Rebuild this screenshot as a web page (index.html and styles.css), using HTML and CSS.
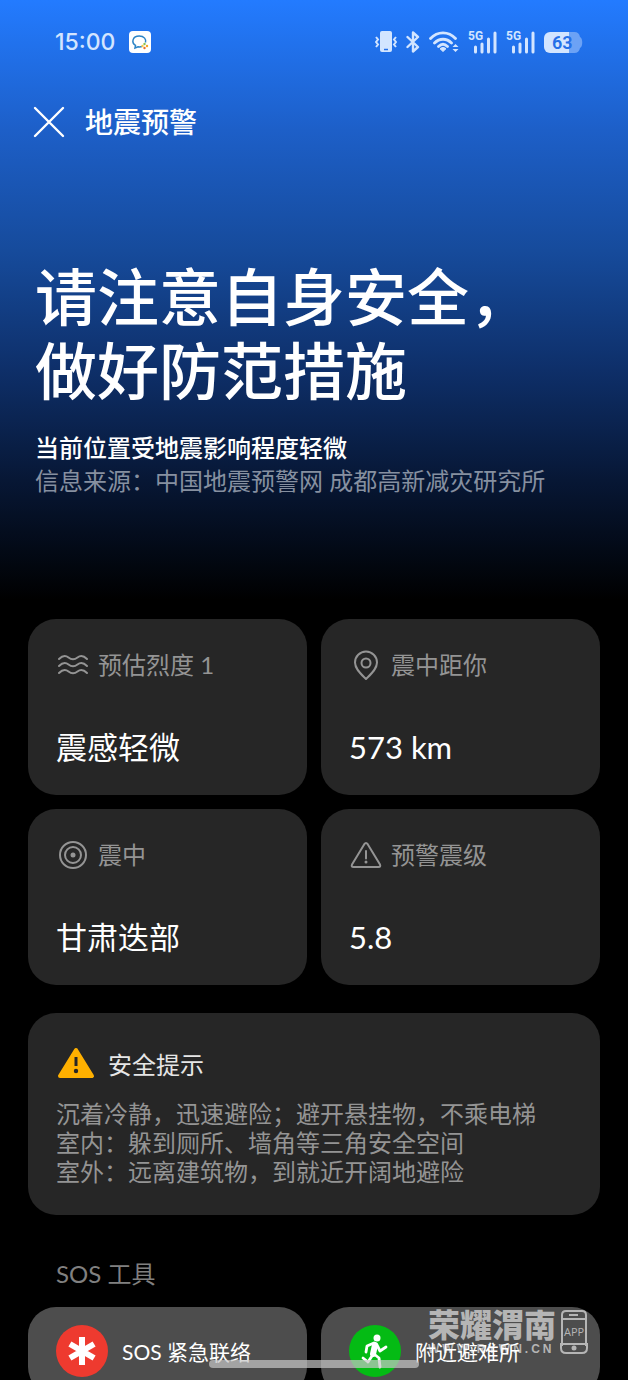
FILE: index.html
```html
<!DOCTYPE html>
<html lang="zh-CN">
<head>
	<meta charset="utf-8">
	<meta name="viewport" content="width=device-width, initial-scale=1">
	<title>地震预警</title>
	<link rel="stylesheet" href="styles.css">
</head>
<body>
	<div class="screen">
		<div class="status-bar">
			<span class="time">15:00</span>
			<svg class="app-badge" viewBox="0 0 22 22">
				<rect width="22" height="22" rx="4" fill="#fff"/>
				<path d="M13 15.500c-1.200.4-2.600.5-4 .2L6 17l.5-2.600C2 11.500 3.500 5 10.200 5c5 0 7.300 3.500 6.300 6.500" fill="none" stroke="#2b84c6" stroke-width="1.500"/>
				<circle cx="15.500" cy="13" r="1.200" fill="#8cc152"/>
				<circle cx="18" cy="15" r="1.200" fill="#f5a623"/>
				<circle cx="15.500" cy="17" r="1.200" fill="#e8742c"/>
				<circle cx="13.500" cy="15" r="1.200" fill="#f7c948"/>
			</svg>
			<div class="status-icons">
				<svg width="22" height="22" viewBox="0 0 22 22">
					<rect x="5" y="0" width="12" height="21" rx="2" fill="#d3e5ff"/>
					<path d="M9 18.500h4" stroke="#2570e8" stroke-width="1.500"/>
					<path d="M1 6l2 2.500-2 2.500 2 2.500-2 2.500M21 6l-2 2.500 2 2.500-2 2.500 2 2.500" fill="none" stroke="#d3e5ff" stroke-width="2"/>
				</svg>
				<svg width="14" height="22" viewBox="0 0 14 22">
					<path d="M1.500 6L12 16l-5 4.500v-19L12 6 1.500 16" fill="none" stroke="#d3e5ff" stroke-width="2.400" stroke-linejoin="round" stroke-linecap="round"/>
				</svg>
				<svg width="30" height="22" viewBox="0 0 30 22">
					<path d="M1.500 7.500c7-7.500 18-7.500 25 0M5.500 12c5-5 12-5 17 0M9.500 15.500c3-3 6-3 9 0" fill="none" stroke="#d3e5ff" stroke-width="2.800" stroke-linecap="round"/>
					<path d="M14 20.500l-3-2.800c2-1.600 4-1.600 6 0z" fill="#d3e5ff" stroke="#d3e5ff"/>
					<path d="M23.500 16h6l-3-3zM23.500 18h6l-3 3z" fill="#d3e5ff"/>
				</svg>
				<svg width="29" height="24" viewBox="0 0 29 24">
					<text class="network" x="0" y="10">5G</text>
					<path d="M7.500 17v5M14 14v8M20.500 9v13M27 3v19" stroke="#d3e5ff" stroke-width="3" stroke-linecap="round"/>
				</svg>
				<svg width="29" height="24" viewBox="0 0 29 24">
					<text class="network" x="0" y="10">5G</text>
					<path d="M7.500 17v5M14 14v8M20.500 9v13M27 3v19" stroke="#d3e5ff" stroke-width="3" stroke-linecap="round"/>
				</svg>
				<svg class="battery" width="39" height="21" viewBox="0 0 39 21">
					<path d="M24 0h6a6 6 0 0 1 6 5c3 1 3 10 0 11a6 6 0 0 1-6 5h-6z" fill="#6ca2f5"/>
					<path d="M6 0h19v21H6a6 6 0 0 1-6-6V6a6 6 0 0 1 6-6z" fill="#d3e5ff"/>
					<text x="8" y="17">63</text>
				</svg>
			</div>
		</div>

		<header>
			<button class="close" aria-label="关闭">
				<svg width="32" height="32" viewBox="0 0 32 32"><path d="M2 2l28 28M30 2L2 30" stroke="#fff" stroke-width="2.400" stroke-linecap="round"/></svg>
			</button>
			<span class="page-title">地震预警</span>
		</header>

		<section class="alert">
			<h1>请注意自身安全，<br>做好防范措施</h1>
			<p>当前位置受地震影响程度轻微</p>
			<p class="source">信息来源：中国地震预警网 成都高新减灾研究所</p>
		</section>

		<main>
			<div class="grid">
				<div class="card">
					<div class="label">
						<svg width="34" height="34" viewBox="0 0 34 34"><path d="M3 11q5-5 9.500-1.500t9 0T31 11M3 18q5-5 9.500-1.500t9 0T31 18M3 25q5-5 9.500-1.500t9 0T31 25"/></svg>
						<span>预估烈度 1</span>
					</div>
					<div class="value">震感轻微</div>
				</div>
				<div class="card">
					<div class="label">
						<svg width="34" height="34" viewBox="0 0 34 34"><path d="M17 31C12 26 6 21 6 14.500a11 11 0 0 1 22 0C28 21 22 26 17 31z"/><circle cx="17" cy="15" r="4.500"/></svg>
						<span>震中距你</span>
					</div>
					<div class="value">573 km</div>
				</div>
				<div class="card">
					<div class="label">
						<svg width="34" height="34" viewBox="0 0 34 34"><circle cx="17" cy="17" r="13"/><circle cx="17" cy="17" r="8"/><circle cx="17" cy="17" r="2.500" class="dot"/></svg>
						<span>震中</span>
					</div>
					<div class="value">甘肃迭部</div>
				</div>
				<div class="card">
					<div class="label">
						<svg width="34" height="34" viewBox="0 0 34 34"><path d="M15.300 6.200q1.700-2.400 3.400 0L31 26.500q1 2.500-1.500 2.500h-25Q2 29 3 26.500zM17 13v7.500"/><circle cx="17" cy="24" r="1.500" class="dot"/></svg>
						<span>预警震级</span>
					</div>
					<div class="value">5.8</div>
				</div>
			</div>

			<div class="card tips">
				<h2>
					<svg width="40" height="34" viewBox="0 0 40 34">
						<path d="M20 4L36 30H4z" fill="#ffb000" stroke="#ffb000" stroke-width="4" stroke-linejoin="round"/>
						<path d="M20 11v9" stroke="#262626" stroke-width="3"/>
						<circle cx="20" cy="25" r="2.200" fill="#262626"/>
					</svg>
					安全提示
				</h2>
				<p>沉着冷静，迅速避险；避开悬挂物，不乘电梯<br>室内：躲到厕所、墙角等三角安全空间<br>室外：远离建筑物，到就近开阔地避险</p>
			</div>

			<h3>SOS 工具</h3>
			<div class="grid">
				<button class="tool">
					<svg width="52" height="52" viewBox="0 0 52 52">
						<circle cx="26" cy="26" r="26" fill="#ee3a2f"/>
						<path d="M26 12v28M13.900 19l24.200 14M38.100 19L13.900 33" stroke="#fff" stroke-width="6"/>
					</svg>
					<span>SOS 紧急联络</span>
				</button>
				<button class="tool">
					<svg width="52" height="52" viewBox="0 0 52 52">
						<circle cx="26" cy="26" r="26" fill="#04bb14"/>
						<circle cx="28" cy="13" r="3.500" fill="#fff"/>
						<path d="M26 20l-2 9" stroke="#fff" stroke-width="6" stroke-linecap="round"/>
						<path d="M25 18l-7 3-1 6M28 20l3 6 6-4M25 29l5 4 1 9M23 31l-4 6-5-4" fill="none" stroke="#fff" stroke-width="2.800" stroke-linecap="round" stroke-linejoin="round"/>
					</svg>
					<span>附近避难所</span>
				</button>
			</div>
		</main>

		<div class="watermark">
			<div>
				<div class="mark-name">荣耀渭南</div>
				<div class="mark-url">WWW.RYWN.CN</div>
			</div>
			<svg width="28" height="46" viewBox="0 0 28 46">
				<path d="M2 37V6q0-4 4-4h16q4 0 4 4v31M1 10h26M1 35h26v4q0 5-5 5H6q-5 0-5-5zM9 6h9" fill="none" stroke="#b5b5b5" stroke-width="2"/>
				<circle cx="14" cy="39" r="2.500" fill="#b5b5b5"/>
				<text x="4" y="27">APP</text>
			</svg>
		</div>
		<div class="home-bar"></div>
	</div>
</body>
</html>
```

FILE: styles.css
```css
* {
	box-sizing: border-box;
}
body {
	margin: 0;
	background-color: #000;
	color: #fff;
	font-family: Lato, "Noto Sans CJK SC", sans-serif;
	font-size: 24px;
}
h1, h2, h3, p {
	margin: 0;
	font-weight: 400;
}
button {
	border: none;
	padding: 0;
	color: inherit;
	font-family: inherit;
	cursor: pointer;
}
svg {
	display: block;
	flex-shrink: 0;
}
.screen {
	position: relative;
	height: 100vh;
	overflow: hidden;
	background: linear-gradient(#237bff 0, #1d5fc8 130px, #164b9c 250px, #0e2f69 370px, #071735 480px, #000 600px);
}

/* status bar */
.status-bar {
	display: flex;
	align-items: center;
	height: 84px;
	padding: 0 45px 0 55px;
}
.time {
	font-family: Inter, sans-serif;
	font-size: 23px;
	font-weight: 500;
	color: #d3e5ff;
}
.app-badge {
	width: 22px;
	height: 22px;
	margin-left: 14px;
}
.status-icons {
	display: flex;
	align-items: center;
	gap: 9px;
	margin-left: auto;
}
.network {
	font: 700 12px Roboto, sans-serif;
	fill: #d3e5ff;
}
.battery text {
	font: 600 18px Roboto, sans-serif;
	fill: #2570e8;
}

header {
	display: flex;
	align-items: center;
	gap: 20px;
	height: 76px;
	padding: 0 33px;
}
.close {
	background: none;
}
.page-title {
	font-size: 28px;
	font-weight: 500;
	line-height: 40px;
}

.alert {
	padding: 100px 35px 0;
	height: 459px;
	line-height: 33px;
}
.alert h1 {
	margin-bottom: 23px;
	font-size: 62px;
	font-weight: 500;
	line-height: 74px;
}
.alert p {
	font-weight: 500;
}
.alert .source {
	color: #8690a0;
	font-weight: 400;
}

/* cards */
main {
	padding: 0 28px;
}
.grid {
	display: grid;
	grid-template-columns: 1fr 1fr;
	gap: 14px;
}
.card {
	padding: 28px;
	border-radius: 28px;
	background-color: #262626;
}
.grid .card {
	height: 176px;
}
.label {
	display: flex;
	align-items: center;
	gap: 8px;
	height: 36px;
	line-height: 34px;
	color: #949494;
}
.label svg {
	fill: none;
	stroke: #949494;
	stroke-width: 2;
	stroke-linecap: round;
	stroke-linejoin: round;
}
.label .dot {
	fill: #949494;
	stroke: none;
}
.value {
	margin-top: 42px;
	font-size: 31px;
	line-height: 44px;
}

.tips {
	margin-top: 28px;
	height: 202px;
}
.tips h2 {
	display: flex;
	align-items: center;
	gap: 12px;
	height: 44px;
	font-size: 24px;
	color: #e6e6e6;
}
.tips p {
	margin-top: 14px;
	line-height: 29px;
	color: #949494;
	white-space: nowrap;
}

h3 {
	padding: 42px 28px 16px;
	font-size: 24px;
	line-height: 34px;
	color: #808080;
}
.tool {
	display: flex;
	align-items: center;
	gap: 14px;
	height: 88px;
	padding: 0 28px;
	border-radius: 28px;
	background-color: #4d4d4d;
	font-size: 21px;
}
.tool span {
	position: relative;
	z-index: 1;
}

/* overlays */
.watermark {
	position: absolute;
	right: 40px;
	bottom: 24px;
	display: flex;
	align-items: center;
	gap: 4px;
	color: #b5b5b5;
	pointer-events: none;
}
.mark-name {
	font-size: 32px;
	font-weight: 900;
	line-height: 34px;
}
.mark-url {
	width: 128px;
	font: 700 12px "Liberation Sans", sans-serif;
	letter-spacing: 3px;
	white-space: nowrap;
}
.watermark text {
	font: 11px "Open Sans", sans-serif;
	fill: #b5b5b5;
}
.home-bar {
	position: absolute;
	z-index: 2;
	left: 50%;
	bottom: 12px;
	width: 210px;
	height: 8px;
	margin-left: -105px;
	border-radius: 4px;
	background-color: rgba(200, 200, 200, 0.7);
}
```
